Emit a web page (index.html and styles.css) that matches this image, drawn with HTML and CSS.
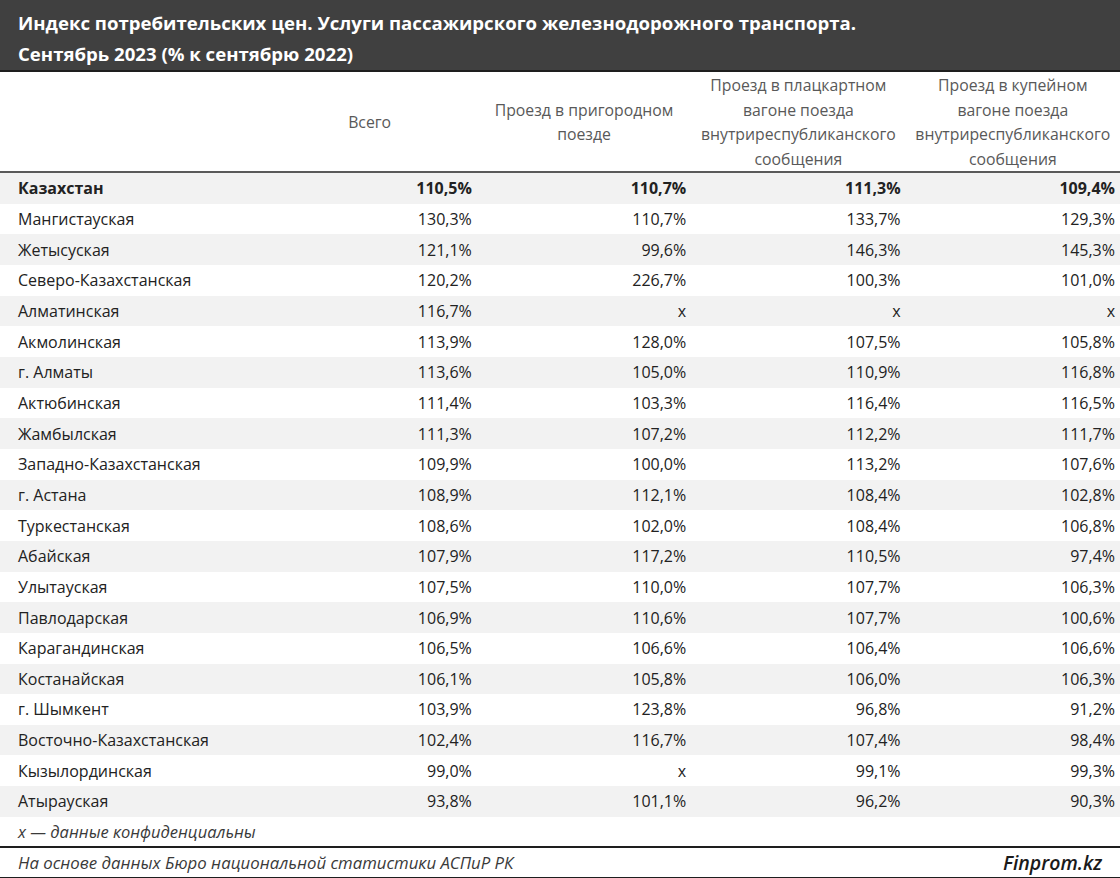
FILE: index.html
```html
<!DOCTYPE html>
<html lang="ru">
<head>
<meta charset="utf-8">
<link rel="stylesheet" href="styles.css">
</head>
<body>
<div class="page">
  <div class="title">
    <div>Индекс потребительских цен. Услуги пассажирского железнодорожного транспорта.</div>
    <div>Сентябрь 2023 (% к сентябрю 2022)</div>
  </div>
  <table class="data">
    <colgroup>
      <col class="c-name"><col class="c-num"><col class="c-num"><col class="c-num"><col class="c-num">
    </colgroup>
    <thead>
      <tr>
        <th></th>
        <th>Всего</th>
        <th>Проезд в пригородном<br>поезде</th>
        <th>Проезд в плацкартном<br>вагоне поезда<br>внутриреспубликанского<br>сообщения</th>
        <th>Проезд в купейном<br>вагоне поезда<br>внутриреспубликанского<br>сообщения</th>
      </tr>
    </thead>
    <tbody>
      <tr class="total"><td>Казахстан</td><td>110,5%</td><td>110,7%</td><td>111,3%</td><td>109,4%</td></tr>
      <tr><td>Мангистауская</td><td>130,3%</td><td>110,7%</td><td>133,7%</td><td>129,3%</td></tr>
      <tr><td>Жетысуская</td><td>121,1%</td><td>99,6%</td><td>146,3%</td><td>145,3%</td></tr>
      <tr><td>Северо-Казахстанская</td><td>120,2%</td><td>226,7%</td><td>100,3%</td><td>101,0%</td></tr>
      <tr><td>Алматинская</td><td>116,7%</td><td>x</td><td>x</td><td>x</td></tr>
      <tr><td>Акмолинская</td><td>113,9%</td><td>128,0%</td><td>107,5%</td><td>105,8%</td></tr>
      <tr><td>г. Алматы</td><td>113,6%</td><td>105,0%</td><td>110,9%</td><td>116,8%</td></tr>
      <tr><td>Актюбинская</td><td>111,4%</td><td>103,3%</td><td>116,4%</td><td>116,5%</td></tr>
      <tr><td>Жамбылская</td><td>111,3%</td><td>107,2%</td><td>112,2%</td><td>111,7%</td></tr>
      <tr><td>Западно-Казахстанская</td><td>109,9%</td><td>100,0%</td><td>113,2%</td><td>107,6%</td></tr>
      <tr><td>г. Астана</td><td>108,9%</td><td>112,1%</td><td>108,4%</td><td>102,8%</td></tr>
      <tr><td>Туркестанская</td><td>108,6%</td><td>102,0%</td><td>108,4%</td><td>106,8%</td></tr>
      <tr><td>Абайская</td><td>107,9%</td><td>117,2%</td><td>110,5%</td><td>97,4%</td></tr>
      <tr><td>Улытауская</td><td>107,5%</td><td>110,0%</td><td>107,7%</td><td>106,3%</td></tr>
      <tr><td>Павлодарская</td><td>106,9%</td><td>110,6%</td><td>107,7%</td><td>100,6%</td></tr>
      <tr><td>Карагандинская</td><td>106,5%</td><td>106,6%</td><td>106,4%</td><td>106,6%</td></tr>
      <tr><td>Костанайская</td><td>106,1%</td><td>105,8%</td><td>106,0%</td><td>106,3%</td></tr>
      <tr><td>г. Шымкент</td><td>103,9%</td><td>123,8%</td><td>96,8%</td><td>91,2%</td></tr>
      <tr><td>Восточно-Казахстанская</td><td>102,4%</td><td>116,7%</td><td>107,4%</td><td>98,4%</td></tr>
      <tr><td>Кызылординская</td><td>99,0%</td><td>x</td><td>99,1%</td><td>99,3%</td></tr>
      <tr><td>Атырауская</td><td>93,8%</td><td>101,1%</td><td>96,2%</td><td>90,3%</td></tr>
    </tbody>
  </table>
  <div class="note">x — данные конфиденциальны</div>
  <div class="source">
    <span>На основе данных Бюро национальной статистики АСПиР РК</span>
    <span class="brand">Finprom.kz</span>
  </div>
</div>
</body>
</html>
```

FILE: styles.css
```css
html, body {
  margin: 0;
  padding: 0;
  background: #ffffff;
}
body {
  font-family: "Open Sans", "Noto Sans", sans-serif;
  color: #222222;
}
.page {
  width: 1120px;
  height: 878px;
  overflow: hidden;
}
.title {
  background: #404040;
  color: #ffffff;
  font-weight: 700;
  font-size: 18.6px;
  line-height: 31px;
  padding: 7px 0 1px 18px;
  height: 62px;
  border-bottom: 2px solid #1e1e1e;
}
.data {
  width: 1120px;
  border-collapse: collapse;
  table-layout: fixed;
}
.c-name { width: 262px; }
.c-num { width: 214px; }
.data th {
  height: 98px;
  padding: 1px 2px 0;
  font-weight: 400;
  font-size: 15.8px;
  line-height: 24.5px;
  color: #595959;
  text-align: center;
  vertical-align: middle;
  white-space: nowrap;
  border-bottom: 2px solid #5a5a5a;
}
.data td {
  height: 30.67px;
  padding: 0 5px 0 0;
  font-size: 16px;
  text-align: right;
  white-space: nowrap;
}
.data td:first-child {
  text-align: left;
  padding-left: 18px;
}
.data tbody tr:nth-child(odd) td {
  background: #f2f2f2;
}
.data tr.total td {
  font-weight: 700;
}
.note {
  height: 29px;
  line-height: 29px;
  padding-left: 18px;
  font-size: 16.5px;
  font-style: italic;
  color: #3a3a3a;
  border-bottom: 2px solid #1e1e1e;
}
.source {
  display: flex;
  justify-content: space-between;
  align-items: center;
  height: 29px;
  padding: 0 18px;
  font-size: 16.8px;
  font-style: italic;
  color: #3a3a3a;
  border-bottom: 2px solid #1e1e1e;
}
.brand {
  font-size: 19.5px;
  font-weight: 600;
  color: #1a1a1a;
}
```
